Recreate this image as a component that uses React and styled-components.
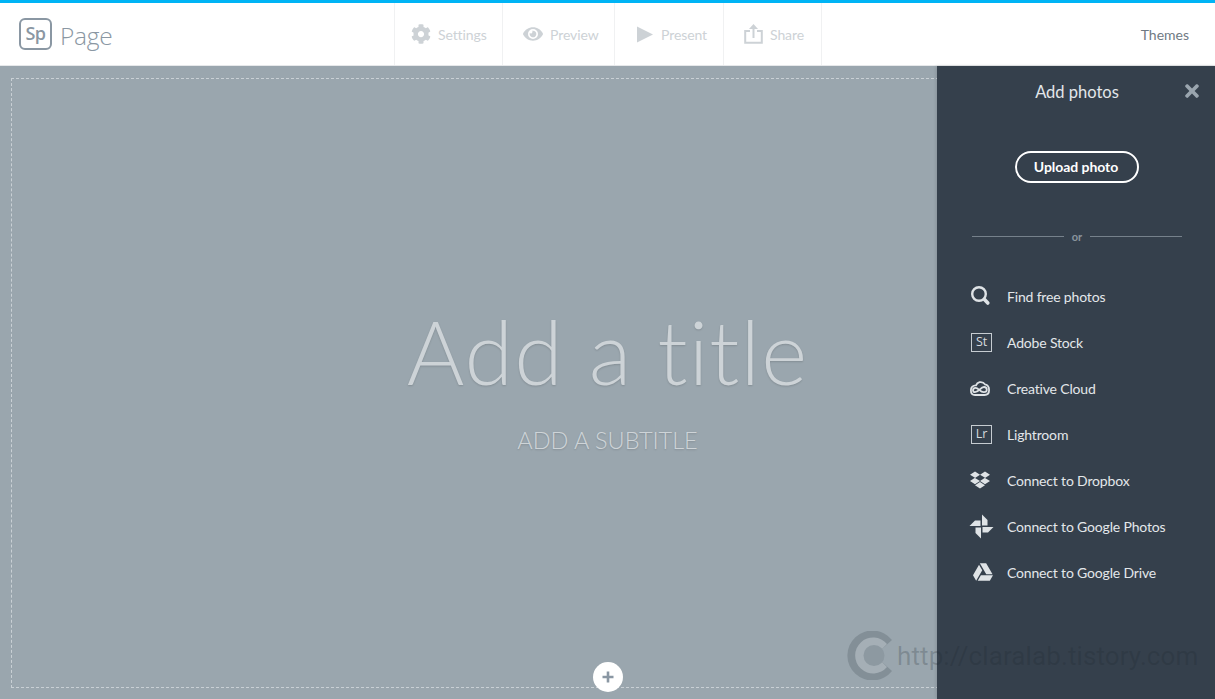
import React from "react";
import styled, { createGlobalStyle } from "styled-components";
import { FaCog, FaEye, FaDropbox, FaGoogleDrive, FaTimes } from "react-icons/fa";

const Global = createGlobalStyle`
  html, body { margin: 0; padding: 0; height: 100%; overflow: hidden; }
  #root { height: 100%; }
  * { box-sizing: border-box; }
  body { font-family: "Lato", "Noto Sans", sans-serif; }
`;

const Page = styled.div`
  width: 1215px; height: 699px; display: flex; flex-direction: column; position: relative; overflow: hidden;
`;
const TopBar = styled.header`
  height: 66px; flex: none; background: #fff; border-top: 3px solid #00b4f5; border-bottom: 1px solid #e6e8ea;
  display: grid; grid-template-columns: 394px 1fr auto; align-items: stretch;
`;
const Brand = styled.div`
  display: flex; align-items: center; gap: 8px; padding: 0 0 0 19px;
`;
const Logo = styled.div`
  width: 33px; height: 32px; border: 2px solid #8a97a3; border-radius: 6px; color: #8a97a3;
  display: flex; align-items: center; justify-content: center; font-size: 18px; font-family: "Open Sans", sans-serif; font-weight: 600; letter-spacing: -0.5px; padding-bottom: 2px;
`;
const BrandName = styled.span`
  font-size: 24.5px; color: #8a97a3; font-weight: 300; font-family: "Open Sans", sans-serif; letter-spacing: -0.3px; padding-top: 2px;
`;
const Nav = styled.nav`
  display: flex; border-left: 1px solid #f0f1f2;
`;
const NavItem = styled.div`
  width: ${p => p.$w}px; border-right: 1px solid #f0f1f2; display: flex; align-items: center; padding-left: ${p => p.$pl}px; gap: ${p => p.$gap}px;
  color: #cdd2d6; font-size: 14px; letter-spacing: -0.1px; svg { flex: none; display: block; }
`;
const Themes = styled.div`
  color: #6f7a84; font-size: 14px; display: flex; align-items: center; padding-right: 26px;
`;
const Main = styled.main`
  flex: 1; position: relative; background: #9aa6ae; padding: 12px 11px 11px; display: flex;
`;
const Frame = styled.div`
  flex: 1; border: 1px dashed #c9d0d5; display: flex; flex-direction: column; align-items: center; position: relative; padding-top: 222px;
`;
const Title = styled.h1`
  margin: 0; font-size: 88px; line-height: 100px; font-weight: 300; color: #cdd3d7; letter-spacing: 1.1px;
  text-shadow: 0 1px 2px rgba(0,0,0,.15); font-family: "Lato", sans-serif;
`;
const Subtitle = styled.div`
  margin-top: 25px; font-size: 23.5px; line-height: 28px; color: #ced4d8; font-weight: 300; text-shadow: 0 1px 2px rgba(0,0,0,.15);
`;
const PlusButton = styled.button`
  position: absolute; left: 50%; bottom: -5px; margin-left: -15px; width: 30px; height: 30px; padding: 0;
  border: 0; border-radius: 50%; background: #fff; display: flex; align-items: center; justify-content: center;
`;
const Panel = styled.aside`
  position: absolute; top: 0; right: 0; bottom: 0; width: 278px; background: #35404c; box-shadow: -1px 0 3px rgba(0,0,0,.12);
  display: flex; flex-direction: column; align-items: center; color: #e3e7ea; padding-left: 2px;
`;
const PanelHead = styled.div`
  width: 100%; height: 52px; position: relative; display: flex; align-items: center; justify-content: center; font-size: 16.5px;
`;
const Close = styled.span`
  position: absolute; right: 13px; top: 15px; color: #9aa5ae; display: flex;
`;
const Upload = styled.button`
  margin-top: 33px; width: 124px; height: 32px; border-radius: 16px; border: 2px solid #fff; background: transparent;
  color: #fff; font: 700 14px "Lato", sans-serif; padding: 0 2px 2px 0; letter-spacing: -0.05px;
`;
const Divider = styled.div`
  margin-top: 47px; width: 210px; display: flex; align-items: center; gap: 8px; color: #8a949d; font-size: 11px; font-weight: 700;
  &::before, &::after { content: ""; flex: 1; height: 1px; background: #76818b; }
`;
const List = styled.ul`
  list-style: none; margin: 39px 0 0 -2px; padding: 0 0 0 30px; width: 278px; display: flex; flex-direction: column; gap: 18px;
`;
const Row = styled.li`
  display: flex; align-items: center; height: 28px; font-size: 14px; letter-spacing: -0.17px; color: #e3e7ea;
`;
const IconSlot = styled.span`
  width: 40px; flex: none; display: flex; color: #dfe3e6; padding-left: ${p => p.$pl || 0}px; svg { display: block; }
`;
const AppBox = styled.span`
  width: 21px; height: 19px; border: 1px solid #c6ccd1; margin-left: 4px; display: flex; align-items: center; justify-content: center;
  font-family: "Open Sans", sans-serif; font-size: 12.5px; color: #d5dade; line-height: 1;
`;
const Watermark = styled.div`
  position: absolute; left: 846px; top: 631px; display: flex; align-items: center; gap: 3px; pointer-events: none;
  color: rgba(30,38,46,.22); font-size: 26px; font-family: "Roboto", sans-serif; font-weight: 400; letter-spacing: 0.1px;
`;

const Play = () => (
  <svg width="16" height="17" viewBox="0 0 16 17"><path d="M0 0.5 L16 8.5 L0 16.5 Z" fill="#cdd2d6"/></svg>
);
const ShareIcon = () => (
  <svg width="19" height="20" viewBox="0 0 19 20" fill="none" stroke="#cdd2d6" strokeWidth="2">
    <path d="M6 7H1.2V18.8H17.8V7H13"/><path d="M9.5 14V2"/><path fill="#cdd2d6" stroke="none" d="M9.5 0 L14 5 H5 Z"/>
  </svg>
);
const SearchIcon = () => (
  <svg width="20" height="20" viewBox="0 0 20 20" fill="none" stroke="#dfe3e6">
    <circle cx="8" cy="8" r="6.8" strokeWidth="2.4"/><path d="M13.5 13.5 L16.8 17" strokeWidth="3.6" strokeLinecap="round"/>
  </svg>
);
const CloudIcon = () => (
  <svg width="20" height="15" viewBox="0 0 20 15" fill="none" stroke="#dfe3e6" strokeWidth="1.8">
    <path d="M5 14 H14.5 C17.5 14 19.1 11.8 19.1 9 C19.1 6.2 17.5 4 15 3.4 C13.8 1.4 11.6 .9 9.6 1.2 C7.8 1.6 6.6 2.8 6 4.4 C3 4.2 .9 6.4 .9 9.2 C.9 12 2.4 14 5 14 Z"/>
    <path d="M5 11.2 C3.6 11.2 3 10.2 3 9.2 C3 7.6 4.2 6.8 5.6 6.8 C8.6 6.8 10 11.2 13.8 11.2 C15.8 11.2 16.8 10.2 16.8 8.8 C16.8 7.2 15.8 6 14 6 C10.4 6 9.2 11.2 5 11.2 Z"/>
  </svg>
);
const Blade = "M13 .5 L18.5 6 V11.5 H13 Z";
const PinwheelIcon = () => (
  <svg width="25" height="25" viewBox="0 0 25 25" fill="#dfe3e6">
    <path d={Blade}/>
    <path d={Blade} transform="rotate(90 12.5 12.5)"/>
    <path d={Blade} transform="rotate(180 12.5 12.5)"/>
    <path d={Blade} transform="rotate(270 12.5 12.5)"/>
  </svg>
);
const PlusIcon = () => (
  <svg width="12" height="12" viewBox="0 0 12 12"><path d="M6 .5V11.5M.5 6H11.5" stroke="#8a97a3" strokeWidth="2.6"/></svg>
);
const CMark = () => (
  <svg width="48" height="49" viewBox="0 0 48 49">
    <path d="M46 9 A25 25 0 1 0 46 40 L36 31 A10 10 0 0 1 36 18 Z" fill="rgba(60,70,80,.24)"/>
    <path d="M41 13 A18 18 0 1 0 41 36 L36 31 A10 10 0 0 1 36 18 Z" fill="#a5afb6"/>
    <circle cx="28" cy="24.5" r="10.5" fill="#8d99a1"/>
  </svg>
);

const navItems = [
  { w: 108, pl: 16, gap: 7, label: "Settings", icon: <FaCog size={20} color="#cdd2d6" /> },
  { w: 112, pl: 20, gap: 7, label: "Preview", icon: <FaEye size={20} color="#cdd2d6" /> },
  { w: 109, pl: 22, gap: 8, label: "Present", icon: <Play /> },
  { w: 98, pl: 20, gap: 7, label: "Share", icon: <ShareIcon /> },
];
const sources = [
  { label: "Find free photos", icon: <SearchIcon />, pl: 4 },
  { label: "Adobe Stock", icon: <AppBox>St</AppBox> },
  { label: "Creative Cloud", icon: <CloudIcon />, pl: 3 },
  { label: "Lightroom", icon: <AppBox>Lr</AppBox> },
  { label: "Connect to Dropbox", icon: <FaDropbox size={20} />, pl: 3 },
  { label: "Connect to Google Photos", icon: <PinwheelIcon />, pl: 2 },
  { label: "Connect to Google Drive", icon: <FaGoogleDrive size={20} />, pl: 6 },
];

export default function App() {
  return (
    <Page>
      <Global />
      <TopBar>
        <Brand>
          <Logo>Sp</Logo>
          <BrandName>Page</BrandName>
        </Brand>
        <Nav>
          {navItems.map(n => (
            <NavItem key={n.label} $w={n.w} $pl={n.pl} $gap={n.gap}>{n.icon}{n.label}</NavItem>
          ))}
        </Nav>
        <Themes>Themes</Themes>
      </TopBar>
      <Main>
        <Frame>
          <Title>Add a title</Title>
          <Subtitle>ADD A SUBTITLE</Subtitle>
          <PlusButton aria-label="Add"><PlusIcon /></PlusButton>
        </Frame>
        <Panel>
          <PanelHead>Add photos<Close><FaTimes size={20} /></Close></PanelHead>
          <Upload>Upload photo</Upload>
          <Divider>or</Divider>
          <List>
            {sources.map(s => (
              <Row key={s.label}><IconSlot $pl={s.pl}>{s.icon}</IconSlot>{s.label}</Row>
            ))}
          </List>
        </Panel>
      </Main>
      <Watermark><CMark />http://claralab.tistory.com</Watermark>
    </Page>
  );
}
